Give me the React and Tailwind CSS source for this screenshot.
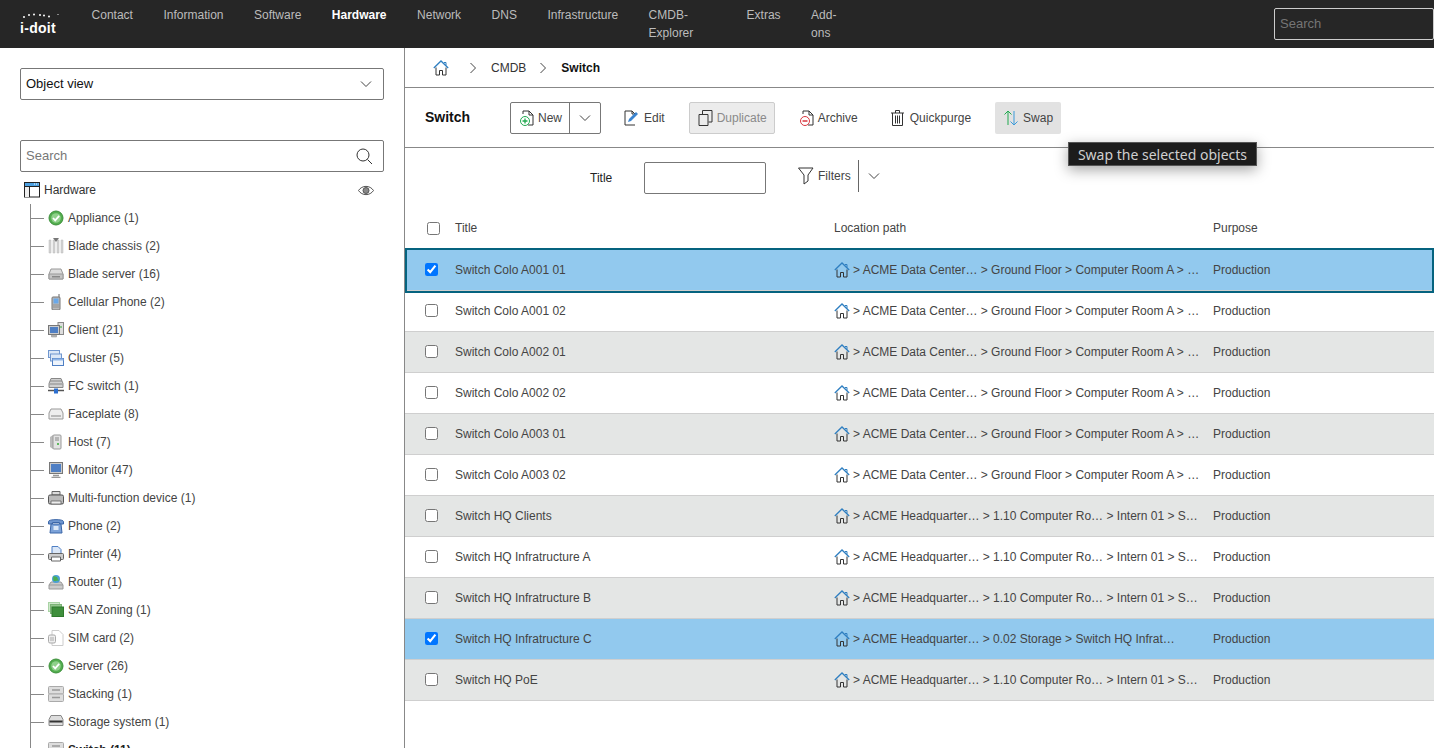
import React from "react";

const Chevron = ({ className = "" }) => (
  <svg width="12" height="8" viewBox="0 0 12 8" fill="none" stroke="#444" strokeWidth="1" className={className}><path d="M1 1.5 6 6.5 11 1.5" /></svg>
);
const RightChevron = () => (
  <svg width="8" height="12" viewBox="0 0 8 12" fill="none" stroke="#444" strokeWidth="1"><path d="M1.5 1 6.5 6 1.5 11" /></svg>
);
const Home = ({ size = 16 }) => (
  <svg width={size} height={size} viewBox="0 0 16 16" fill="none">
    <path d="M3 7.5V15H6.5V10.5H9.5V15H13V7.5" stroke="#333" strokeWidth="1" />
    <path d="M.8 8 8 1 15.2 8" stroke="#2f7fc1" strokeWidth="1.3" />
    <path d="M11 2.5h2v3" stroke="#2f7fc1" strokeWidth="1" />
  </svg>
);

const Svg = ({ children }) => <svg width="16" height="16" viewBox="0 0 16 16" className="shrink-0">{children}</svg>;
const Check = () => (
  <Svg><circle cx="8" cy="8" r="7" fill="#52ad4e" stroke="#3c8f3a" /><circle cx="8" cy="8" r="4.8" fill="#8fd08a" /><path d="M5 8l2.2 2.3L11.2 5.8" stroke="#fff" strokeWidth="1.8" fill="none" /></Svg>
);
const Blade = () => (
  <Svg><path d="M1 2h2v13H1zM5 2h2v13H5zM9 2h2v13H9zM13 2h2v13h-2z" fill="#d4d4d4" stroke="#bbb" strokeWidth=".5" /><path d="M5 0h6L8 4z" fill="#777" /></Svg>
);
const Disk = ({ dark = false }) => (
  <Svg><path d="M3 3h10l2 5v5H1V8z" fill="#dcdcdc" stroke="#999" /><path d="M1 8h14v5H1z" fill="#c4c4c4" stroke="#999" /><path d="M4 10h8v1.5H4z" fill={dark ? "#444" : "#888"} /></Svg>
);
const Cell = () => (
  <Svg><path d="M11 0v4" stroke="#666" /><rect x="4" y="3" width="8" height="13" rx="1" fill="#bbb" stroke="#777" /><rect x="5.5" y="4.5" width="5" height="5" fill="#6aa8e8" /><path d="M5.5 11h5M5.5 13h5" stroke="#666" strokeDasharray="1 1" /></Svg>
);
const Client = () => (
  <Svg><rect x="10" y="0.5" width="5.5" height="12" fill="#ddd" stroke="#888" /><path d="M12 5h2" stroke="#3a3" /><rect x="0.5" y="3.5" width="11" height="9" fill="#ccc" stroke="#777" /><rect x="2" y="5" width="8" height="6" fill="#4f7fc4" /><path d="M3.5 15h5V13h-5z" fill="#bbb" stroke="#888" strokeWidth=".5" /></Svg>
);
const ClusterI = () => (
  <Svg><rect x="0.5" y="0.5" width="11" height="7" fill="#dbe7f7" stroke="#6f96cf" /><rect x="2.5" y="4" width="11" height="7" fill="#dbe7f7" stroke="#6f96cf" /><rect x="4.5" y="8.5" width="11" height="7" fill="#eef4fc" stroke="#4f7fc4" /><path d="M4.5 8.5h11v2h-11z" fill="#8fb4e6" /></Svg>
);
const FC = () => (
  <Svg><path d="M3 .5h10l2 5v4H1v-4z" fill="#d0d0d0" stroke="#888" /><path d="M2 3h12M1.500 6h13" stroke="#888" /><path d="M0 12.500h16" stroke="#555" strokeWidth="1.500" /><rect x="6" y="10.500" width="4" height="5" fill="#2c6fd0" /></Svg>
);
const Faceplate = () => (
  <Svg><path d="M3 3h10l2 4v6H1V7z" fill="#eee" stroke="#999" /><path d="M3.500 10h9" stroke="#666" strokeWidth="1.500" strokeDasharray="1 1" /></Svg>
);
const Host = () => (
  <Svg><path d="M2 3 5 1v14L2 13z" fill="#bbb" /><rect x="5" y="1" width="8" height="14" rx="1" fill="#e3e3e3" stroke="#999" /><path d="M7 4h4M7 6h4" stroke="#888" /><path d="M9 10h2" stroke="#3a3" strokeWidth="1.500" /></Svg>
);
const Monitor = () => (
  <Svg><rect x="1.500" y="0.500" width="13" height="11" fill="#ccc" stroke="#777" /><rect x="3" y="2" width="10" height="8" fill="#4f7fc4" /><path d="M5 13.500h6M3.500 15.500h9" stroke="#999" strokeWidth="1.500" /></Svg>
);
const Mfd = () => (
  <Svg><path d="M4 1.500h8V5H4z" fill="#ddd" stroke="#666" /><rect x="0.500" y="5" width="15" height="9" rx="1.500" fill="#bbb" stroke="#555" /><path d="M3 11h10v3H3z" fill="#eee" stroke="#555" strokeWidth=".7" /></Svg>
);
const PhoneI = () => (
  <Svg><path d="M.5 3.500C.5 1 15.500 1 15.500 3.500V6h-4V4.500h-7V6h-4z" fill="#6f96cf" stroke="#3b66a8" /><path d="M3 6h10l1 9H2z" fill="#7ca2d8" stroke="#3b66a8" /><rect x="5.500" y="8" width="5" height="4" fill="#dbe7f7" /></Svg>
);
const Printer = () => (
  <Svg><path d="M4 .5h6l3 3V8H4z" fill="#dbe7f7" stroke="#4f7fc4" /><rect x="0.500" y="7.500" width="15" height="6" rx="1" fill="#ccc" stroke="#666" /><path d="M3.500 11h9v4h-9z" fill="#fff" stroke="#666" /></Svg>
);
const Router = () => (
  <Svg><path d="M3 8h10l2 3v4H1v-4z" fill="#ccc" stroke="#999" /><path d="M1 11h14" stroke="#999" /><circle cx="8" cy="5" r="4" fill="#4c9fd8" /><path d="M6 3c2 0 3 1 3 2s-2 2-3 1zM9 5.500l1.500 1" stroke="#4caf50" strokeWidth="1.500" fill="#4caf50" /></Svg>
);
const San = () => (
  <Svg><rect x="0.500" y="0.500" width="11" height="9" fill="#cfe8cb" stroke="#a9d3a4" /><rect x="2.500" y="2.500" width="11" height="9" fill="#94c78e" stroke="#7db377" /><rect x="4" y="5" width="11.500" height="9.500" fill="#3f8f3c" stroke="#2f7a2c" /></Svg>
);
const Sim = () => (
  <Svg><path d="M4 .5h7l4 4v11H4z" fill="#fff" stroke="#ccc" /><rect x="0.500" y="5" width="7" height="8" rx="1.500" fill="#eee" stroke="#aaa" /><path d="M3 7v4M5 7v4" stroke="#aaa" /></Svg>
);
const Stacking = () => (
  <Svg><rect x="0.500" y="0.500" width="15" height="7.500" rx="1" fill="#ddd" stroke="#aaa" /><rect x="0.500" y="8" width="15" height="7.500" rx="1" fill="#ddd" stroke="#aaa" /><path d="M4 4h8M4 11.500h8" stroke="#999" strokeWidth="1.500" /></Svg>
);
const Storage = () => (
  <Svg><path d="M3 1.500h10l2 4v6H1v-6z" fill="#ddd" stroke="#888" /><path d="M1.500 7.500h13" stroke="#333" strokeWidth="2" /></Svg>
);

const tree = [
  [Check, "Appliance (1)"],
  [Blade, "Blade chassis (2)"],
  [Disk, "Blade server (16)"],
  [Cell, "Cellular Phone (2)"],
  [Client, "Client (21)"],
  [ClusterI, "Cluster (5)"],
  [FC, "FC switch (1)"],
  [Faceplate, "Faceplate (8)"],
  [Host, "Host (7)"],
  [Monitor, "Monitor (47)"],
  [Mfd, "Multi-function device (1)"],
  [PhoneI, "Phone (2)"],
  [Printer, "Printer (4)"],
  [Router, "Router (1)"],
  [San, "SAN Zoning (1)"],
  [Sim, "SIM card (2)"],
  [Check, "Server (26)"],
  [Stacking, "Stacking (1)"],
  [Storage, "Storage system (1)"],
  [Stacking, "Switch (11)", true],
];

const nav = ["Contact", "Information", "Software", "Hardware", "Network", "DNS", "Infrastructure", "CMDB-Explorer", "Extras", "Add-ons"];

const dc = "> ACME Data Center… > Ground Floor > Computer Room A > …";
const hq = "> ACME Headquarter… > 1.10 Computer Ro… > Intern 01 > S…";
const rows = [
  ["Switch Colo A001 01", dc, true],
  ["Switch Colo A001 02", dc],
  ["Switch Colo A002 01", dc],
  ["Switch Colo A002 02", dc],
  ["Switch Colo A003 01", dc],
  ["Switch Colo A003 02", dc],
  ["Switch HQ Clients", hq],
  ["Switch HQ Infratructure A", hq],
  ["Switch HQ Infratructure B", hq],
  ["Switch HQ Infratructure C", "> ACME Headquarter… > 0.02 Storage > Switch HQ Infrat…", true],
  ["Switch HQ PoE", hq],
];

function Row({ title, path, selected, index }) {
  const bg = selected ? "bg-[#92c9ee]" : index % 2 === 0 ? "bg-[#e4e6e5]" : "bg-white";
  return (
    <div className={`relative grid h-[41px] grid-cols-[50px_379px_379px_1fr] items-center border-b border-[#cfcfcf] pb-px text-[12px] text-[#444] ${bg}`}>
      <div className="flex pl-5"><input type="checkbox" checked={!!selected} readOnly /></div>
      <div>{title}</div>
      <div className="flex items-center gap-[3px] whitespace-nowrap">
        <Home />
        <span>{path}</span>
      </div>
      <div>Production</div>
      {index === 0 && <div className="pointer-events-none absolute inset-x-0 -top-[2px] -bottom-[3px] z-10 border-2 border-[#05637f]" />}
    </div>
  );
}

const ToolText = ({ children, className = "" }) => <span className={`text-[12px] ${className}`}>{children}</span>;

export default function App() {
  return (
    <div className="flex h-screen flex-col overflow-hidden bg-white font-['Liberation_Sans',Arial,sans-serif] text-[#222]">
      {/* top bar */}
      <header className="flex h-12 shrink-0 items-center bg-[#262626] pl-5">
        <div className="relative w-[74px] pt-[7px] font-['Liberation_Sans',sans-serif] text-[14px] font-bold leading-none tracking-[0.3px] text-white">
          i-doit
          <svg width="42" height="12" viewBox="0 0 42 12" className="absolute left-0 -top-[1px]">
            <g fill="#fff">
              <circle cx="4" cy="4" r="1" /><circle cx="9" cy="2" r="1" /><circle cx="14" cy="1.500" r="1" /><circle cx="20" cy="2" r="1" /><circle cx="24" cy="2.500" r="1" /><circle cx="29" cy="3.500" r="1" />
              <circle cx="38" cy="1.500" r=".6" />
            </g>
          </svg>
        </div>
        <nav className="flex gap-[30.500px] text-[12px] text-[#bcbcbc]">
          {nav.map((n) => (
            <span key={n} className={n === "Hardware" ? "font-bold text-white" : ""}>{n}</span>
          ))}
        </nav>
        <div className="ml-[427px] flex h-8 w-[160px] shrink-0 items-center rounded-[2px] border border-[#ccc] px-[5px] text-[13px] text-[#757575]">Search</div>
      </header>

      <div className="flex min-h-0 flex-1">
        {/* sidebar */}
        <aside className="w-[405px] shrink-0 overflow-hidden border-r border-[#888] pt-5">
          <div className="mx-5 flex h-8 items-center justify-between rounded-[2px] border border-[#777] pl-[5px] pr-[11px] text-[13px] text-[#111]">
            <span>Object view</span>
            <Chevron />
          </div>
          <div className="mx-5 mt-10 flex h-8 items-center justify-between rounded-[2px] border border-[#777] pl-[5px] pr-[10px] text-[13px] text-[#777]">
            <span>Search</span>
            <svg width="17" height="17" viewBox="0 0 17 17" fill="none" stroke="#333" strokeWidth="1"><circle cx="7" cy="7" r="6" /><path d="M11.500 11.500 16 16" /></svg>
          </div>
          <div className="mt-1 flex h-7 items-center pl-6 pr-[30px] text-[12px] text-[#333]">
            <svg width="16" height="16" viewBox="0 0 16 16" className="mr-1 shrink-0"><rect x="0.500" y="0.500" width="15" height="14.500" fill="#fff" stroke="#222" /><path d="M1 1h14v3H1z" fill="#4b9fe0" /><path d="M5.500 4v11M1 4.500h14" stroke="#222" /><path d="M1 5h4v10H1z" fill="#eee" /><path d="M10 2h1M12 2h1M14 2h.5" stroke="#fff" /></svg>
            <span>Hardware</span>
            <svg width="16" height="11" viewBox="0 0 16 11" fill="none" className="ml-auto"><path d="M.5 5.500C4 0 12 0 15.500 5.500 12 11 4 11 .5 5.500z" stroke="#555" /><circle cx="8" cy="5.500" r="3" fill="#888" stroke="#555" /></svg>
          </div>
          <ul className="ml-[30px] border-l border-[#888]">
            {tree.map(([Icon, label, bold]) => (
              <li key={label} className="flex h-7 items-center text-[12px] text-[#444]">
                <span className="h-px w-[13px] shrink-0 bg-[#888]" />
                <span className="ml-1"><Icon /></span>
                <span className={`ml-1 ${bold ? "font-bold text-[#222]" : ""}`}>{label}</span>
              </li>
            ))}
          </ul>
        </aside>

        {/* main */}
        <main className="min-w-0 flex-1">
          <div className="flex h-10 items-center border-b border-[#888] pl-7 text-[12px]">
            <Home />
            <span className="ml-[20px]"><RightChevron /></span>
            <span className="ml-[14px] text-[#333]">CMDB</span>
            <span className="ml-[13px]"><RightChevron /></span>
            <span className="ml-[14px] font-bold text-[#111]">Switch</span>
          </div>

          <div className="flex h-[60px] items-center border-b border-[#888] pl-5">
            <span className="w-[85px] text-[14px] font-bold text-[#111]">Switch</span>
            <div className="flex h-8 w-[91px] items-center rounded-[2px] border border-[#777]">
              <div className="flex h-full w-[59px] items-center gap-[3px] border-r border-[#777] pl-2">
                <svg width="16" height="16" viewBox="0 0 16 16" fill="none" className="shrink-0"><path d="M4 4V1h6l4 4v10H9" stroke="#333" /><path d="M10 1v4h4" stroke="#333" /><circle cx="6" cy="11" r="4.500" fill="#fff" stroke="#20a94f" /><path d="M3.500 11h5M6 8.500v5" stroke="#20a94f" strokeWidth="1.300" /></svg>
                <ToolText className="text-[#444]">New</ToolText>
              </div>
              <div className="flex flex-1 justify-center"><Chevron /></div>
            </div>
            <div className="ml-[23px] flex items-center gap-[4px]">
              <svg width="16" height="16" viewBox="0 0 16 16" fill="none" className="shrink-0"><path d="M11 15H1V1h7l3 3" stroke="#333" /><path d="M8 1v3h3" stroke="#333" /><path d="M4 12l1-3 7-7 2 2-7 7z" fill="#3b84d0" /></svg>
              <ToolText className="text-[#444]">Edit</ToolText>
            </div>
            <div className="ml-6 flex h-8 w-[86px] items-center gap-[4px] rounded-[2px] border border-[#ccc] bg-[#ececec] pl-[8px]">
              <svg width="15" height="16" viewBox="0 0 15 16" fill="none" stroke="#333" className="shrink-0"><path d="M1 4.500h9v11H1z" /><path d="M4.500 4V.5h9.500v11.500H10.500" /></svg>
              <ToolText className="text-[#8a8a8a]">Duplicate</ToolText>
            </div>
            <div className="ml-6 flex items-center gap-[3px]">
              <svg width="16" height="16" viewBox="0 0 16 16" fill="none" className="shrink-0"><path d="M4 4V1h6l4 4v10H9" stroke="#333" /><path d="M10 1v4h4" stroke="#333" /><circle cx="6" cy="11" r="4.500" fill="#fff" stroke="#d9363e" /><path d="M3.500 11h5" stroke="#d9363e" strokeWidth="1.500" /></svg>
              <ToolText className="text-[#444]">Archive</ToolText>
            </div>
            <div className="ml-[33px] flex items-center gap-[6px]">
              <svg width="13" height="16" viewBox="0 0 13 16" fill="none" stroke="#333" className="shrink-0"><path d="M0 3h13M4.500 3V.5h4V3M1.500 3v12.500h10V3M4.500 5.500v8M6.500 5.500v8M8.500 5.500v8" /></svg>
              <ToolText className="text-[#444]">Quickpurge</ToolText>
            </div>
            <div className="ml-6 flex h-8 w-[66px] items-center gap-[4px] rounded-[2px] bg-[#e2e2e2] pl-2">
              <svg width="16" height="16" viewBox="0 0 16 16" fill="none" className="shrink-0"><path d="M5 15V1M1.500 4.500 5 1l3.500 3.500" stroke="#20a94f" /><path d="M11 1v14M7.500 11.500 11 15l3.500-3.500" stroke="#3b9ad9" /></svg>
              <ToolText className="text-[#444]">Swap</ToolText>
            </div>
          </div>

          <div className="flex h-[60px] items-center">
            <span className="ml-[185px] w-[54px] text-[12px] text-[#222]">Title</span>
            <div className="h-8 w-[122px] rounded-[2px] border border-[#777]" />
            <div className="ml-[32px] flex h-8 items-center -translate-y-[2px]">
              <svg width="16" height="18" viewBox="0 0 16 18" fill="none" stroke="#333" className="shrink-0"><path d="M.5 1h14.500L10 8v6l-4 3V8z" /></svg>
              <span className="ml-1 w-[40px] text-[12px] text-[#444]">Filters</span>
              <span className="h-8 w-px bg-[#666]" />
              <Chevron className="ml-[9px]" />
            </div>
          </div>

          <div className="grid h-[42px] grid-cols-[50px_379px_379px_1fr] items-center pb-[2px] text-[12px] text-[#444]">
            <div className="flex pl-[22px]"><input type="checkbox" readOnly /></div>
            <div>Title</div>
            <div>Location path</div>
            <div>Purpose</div>
          </div>
          {rows.map(([t, p, s], i) => (
            <Row key={t} title={t} path={p} selected={s} index={i} />
          ))}
        </main>
      </div>

      <div className="absolute left-[1068px] top-[142px] z-20 flex h-6 w-[189px] items-center justify-center border border-[#555] bg-[#1c1c1c] font-['Noto_Sans',sans-serif] text-[14px] text-[#cfcfcf] shadow-[0_4px_14px_rgba(0,0,0,0.35)]">
        Swap the selected objects
      </div>
    </div>
  );
}
